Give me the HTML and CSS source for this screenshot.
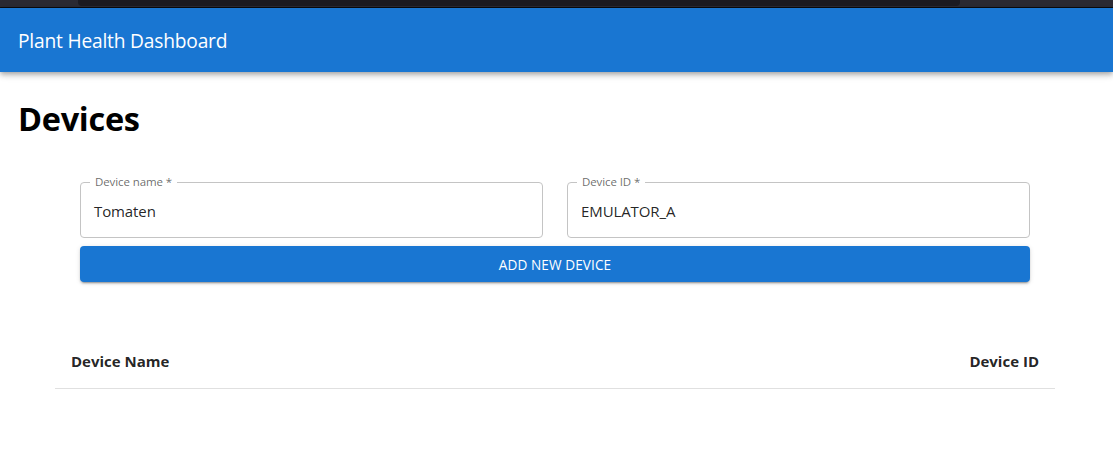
FILE: index.html
```html
<!DOCTYPE html>
<html>
<head>
<meta charset="utf-8">
<link rel="stylesheet" href="styles.css">
</head>
<body>
<div class="chrome"><div class="chrome-inner"></div></div>
<header class="appbar"><span class="appbar-title">Plant Health Dashboard</span></header>
<main class="page">
  <h1 class="heading">Devices</h1>
  <form class="form">
    <div class="fields">
      <div class="field">
        <span class="field-label">Device name *</span>
        <span class="field-value">Tomaten</span>
      </div>
      <div class="field">
        <span class="field-label">Device ID *</span>
        <span class="field-value">EMULATOR_A</span>
      </div>
    </div>
    <button type="button" class="btn">ADD NEW DEVICE</button>
  </form>
  <table class="table">
    <thead>
      <tr><th class="th-left">Device Name</th><th class="th-right">Device ID</th></tr>
    </thead>
  </table>
</main>
</body>
</html>
```
FILE: styles.css
```css
* { box-sizing: border-box; }
html, body { margin: 0; padding: 0; background: #fff; }
body { font-family: "Open Sans", "Noto Sans", sans-serif; color: #000; }
.chrome { height: 8px; background: #2b2a33; border-bottom: 1px solid #0c0c0e; padding: 0 153px 0 78px; }
.chrome-inner { height: 6px; background: #1c1b22; border-radius: 0 0 4px 4px; }
.appbar {
  height: 64px; background: #1976d2; color: #fff; display: flex; align-items: center; padding: 0 18px;
  box-shadow: 0 2px 4px -1px rgba(0,0,0,.2), 0 4px 5px 0 rgba(0,0,0,.14), 0 1px 10px 0 rgba(0,0,0,.12);
  position: relative;
}
.appbar-title { font-size: 19.2px; letter-spacing: -0.2px; }
.page { padding: 0 18px; }
.heading { margin: 25px 0 0; font-size: 32.5px; font-weight: 700; line-height: 44px; letter-spacing: -0.3px; }
.form { margin: 41px 65px 0 62px; display: flex; flex-direction: column; gap: 8px; }
.fields { display: flex; gap: 24px; }
.field {
  flex: 1; height: 56px; border: 1px solid #c4c4c4; border-radius: 4px; position: relative;
  display: flex; align-items: center; padding: 0 13px;
}
.field-label {
  position: absolute; top: -8px; left: 9px; padding: 0 5px; background: #fff;
  font-size: 11.5px; color: rgba(0,0,0,.6); line-height: 14px; letter-spacing: -0.1px;
}
.field-value { font-size: 15px; color: rgba(0,0,0,.87); margin-top: 1px; letter-spacing: -0.1px; }
.btn {
  height: 36px; border: 0; border-radius: 4px; background: #1976d2; color: #fff;
  font-family: inherit; font-size: 13.6px; letter-spacing: 0.1px;
  box-shadow: 0 3px 1px -2px rgba(0,0,0,.2), 0 2px 2px 0 rgba(0,0,0,.14), 0 1px 5px 0 rgba(0,0,0,.12);
}
.table { margin: 51px 0 0 37px; width: 1000px; border-collapse: collapse; }
.table th {
  font-size: 15px; font-weight: 700; color: rgba(0,0,0,.87); padding: 16px 16px 15px; line-height: 24px;
  border-bottom: 1px solid #e0e0e0;
}
.th-left { text-align: left; }
.th-right { text-align: right; }
```
